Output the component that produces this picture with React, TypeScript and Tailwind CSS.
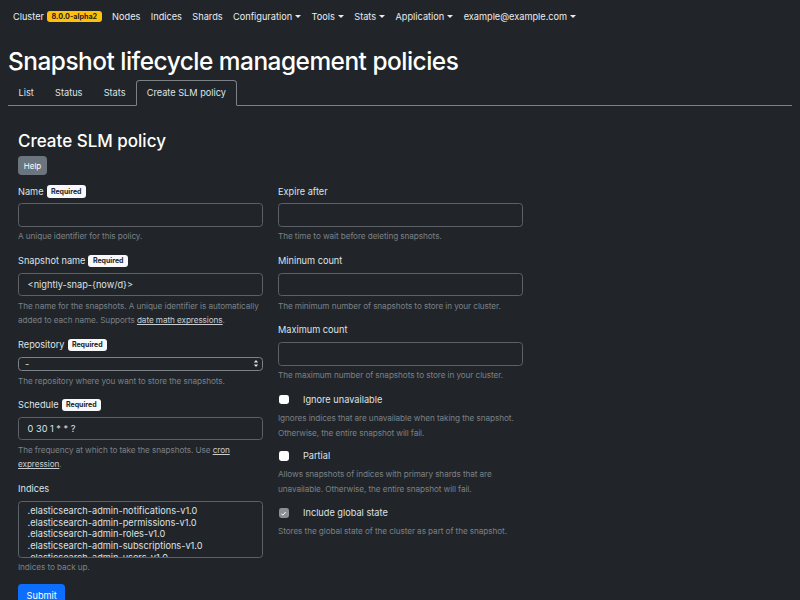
import React from 'react'

const Caret = () => (
  <span className="ml-[3px] inline-block w-0 h-0 border-x-[3px] border-t-[3.5px] border-x-transparent border-t-current align-middle" />
)

const Required = () => (
  <span className="ml-[3px] inline-flex items-center rounded-[3px] bg-[#f8f9fa] px-[4.4px] h-[12.4px] text-[7px] font-bold leading-none text-[#212529]">
    Required
  </span>
)

const Help = ({ children }: { children: React.ReactNode }) => (
  <div className="mt-[2.4px] text-[8.2px] leading-[14.6px] tracking-[-0.01em] text-[#7b8086]">{children}</div>
)

const Field = ({
  label,
  required,
  value,
  children,
}: {
  label: string
  required?: boolean
  value?: string
  children: React.ReactNode
}) => (
  <div className="mb-[9.6px]">
    <div className="mb-[4.8px] flex h-[14.4px] items-center">
      <span>{label}</span>
      {required && <Required />}
    </div>
    <div className="flex h-[23.6px] items-center rounded-[3.6px] border border-[#5c6167] px-[8.6px]">
      {value}
    </div>
    <Help>{children}</Help>
  </div>
)

const Check = ({ label, checked, children }: { label: string; checked?: boolean; children: React.ReactNode }) => (
  <div className="mb-[8.4px]">
    <div className="flex h-[14.4px] items-center">
      {checked ? (
        <span className="ml-[1px] flex h-[9.6px] w-[9.6px] items-center justify-center rounded-[2.4px] bg-[#8c8f93]">
          <svg width="7" height="7" viewBox="0 0 8 8">
            <path d="M1.5 4.2l1.7 1.7 3.3-3.6" fill="none" stroke="#fff" strokeWidth="1.1" />
          </svg>
        </span>
      ) : (
        <span className="ml-[1px] h-[9.6px] w-[9.6px] rounded-[2.4px] bg-white" />
      )}
      <span className="ml-[14.4px]">{label}</span>
    </div>
    <div className="mt-[4px] text-[8.2px] leading-[15px] tracking-[-0.01em] text-[#7b8086]">{children}</div>
  </div>
)

const Link = ({ children }: { children: React.ReactNode }) => (
  <span className="text-[#c9cdd1] underline">{children}</span>
)

export default function App() {
  const navItems = ['Nodes', 'Indices', 'Shards']
  const dropdowns = ['Configuration', 'Tools', 'Stats', 'Application', 'example@example.com']
  const indices = [
    '.elasticsearch-admin-notifications-v1.0',
    '.elasticsearch-admin-permissions-v1.0',
    '.elasticsearch-admin-roles-v1.0',
    '.elasticsearch-admin-subscriptions-v1.0',
    '.elasticsearch-admin-users-v1.0',
  ]

  return (
    <div className="h-[600px] overflow-hidden bg-[#212529] font-['Inter',sans-serif] text-[9.2px] leading-[1.5] text-[#dee2e6]">
      <nav className="flex h-[34px] items-center gap-[10.4px] px-[13px] text-[#e9ecef]">
        <div className="flex items-center">
          <span>Cluster</span>
          <span className="ml-[3px] inline-flex h-[11px] items-center rounded-[3px] bg-[#ffc107] px-[4.6px] text-[7.2px] font-bold leading-none text-[#212529]">
            8.0.0-alpha2
          </span>
        </div>
        {navItems.map((n) => (
          <span key={n}>{n}</span>
        ))}
        {dropdowns.map((d) => (
          <span key={d} className="flex items-center">
            {d}
            <Caret />
          </span>
        ))}
      </nav>

      <h1 className="mx-[8px] mt-[12.6px] mb-[4.6px] text-[24.4px] font-medium leading-[1.2] tracking-[-0.02em] text-white">
        Snapshot lifecycle management policies
      </h1>

      <div className="mx-[8px] flex border-b border-[#7d8287]">
        {['List', 'Status', 'Stats'].map((t) => (
          <span key={t} className="-mb-px border border-transparent px-[9.6px] py-[4.8px]">
            {t}
          </span>
        ))}
        <span className="-mb-px rounded-t-[3.6px] border border-[#7d8287] border-b-[#212529] bg-[#212529] px-[9.6px] py-[4.8px]">
          Create SLM policy
        </span>
      </div>

      <div className="px-[18px] pt-[25px]">
        <h3 className="mb-[4.8px] text-[17px] font-medium leading-[1.2] text-white">Create SLM policy</h3>
        <button className="mb-[9px] rounded-[3.2px] border border-[#6c757d] bg-[#6c757d] px-[4.8px] py-[2.6px] text-[8px] leading-[1.5] text-white">
          Help
        </button>

        <div className="grid grid-cols-[245px_245px] items-start gap-x-[15px]">
          <div>
            <Field label="Name" required>
              A unique identifier for this policy.
            </Field>
            <Field label="Snapshot name" required value="<nightly-snap-{now/d}>">
              The name for the snapshots. A unique identifier is automatically
              <br />
              added to each name. Supports <Link>date math expressions</Link>.
            </Field>

            <div className="mb-[9.6px]">
              <div className="mb-[4.8px] flex h-[14.4px] items-center">
                <span>Repository</span>
                <Required />
              </div>
              <div className="flex h-[14.4px] items-center justify-between rounded-[3.6px] border border-[#7d8287] pl-[6px] pr-[3px]">
                <span className="leading-none">-</span>
                <svg width="6" height="9" viewBox="0 0 6 9">
                  <path d="M0.8 3.4L3 1 5.2 3.4z M0.8 5.6L3 8 5.2 5.6z" fill="#dee2e6" />
                </svg>
              </div>
              <Help>The repository where you want to store the snapshots.</Help>
            </div>

            <Field label="Schedule" required value="0 30 1 * * ?">
              The frequency at which to take the snapshots. Use <Link>cron</Link>
              <br />
              <Link>expression</Link>.
            </Field>

            <div className="mb-[9.6px]">
              <div className="mb-[4.8px] flex h-[14.4px] items-center">Indices</div>
              <div className="h-[57px] overflow-hidden rounded-[3.6px] border border-[#5c6167] px-[8.6px] pt-[3px] leading-[11.7px]">
                {indices.map((i) => (
                  <div key={i}>{i}</div>
                ))}
              </div>
              <Help>Indices to back up.</Help>
            </div>

            <button className="rounded-[3.6px] bg-[#0d6efd] px-[8.6px] py-[4.8px] leading-[14.4px] text-white">
              Submit
            </button>
          </div>

          <div>
            <Field label="Expire after">The time to wait before deleting snapshots.</Field>
            <Field label="Mininum count">The minimum number of snapshots to store in your cluster.</Field>
            <Field label="Maximum count">The maximum number of snapshots to store in your cluster.</Field>
            <Check label="Ignore unavailable">
              Ignores indices that are unavailable when taking the snapshot.
              <br />
              Otherwise, the entire snapshot will fail.
            </Check>
            <Check label="Partial">
              Allows snapshots of indices with primary shards that are
              <br />
              unavailable. Otherwise, the entire snapshot will fail.
            </Check>
            <Check label="Include global state" checked>
              Stores the global state of the cluster as part of the snapshot.
            </Check>
          </div>
        </div>
      </div>
    </div>
  )
}
